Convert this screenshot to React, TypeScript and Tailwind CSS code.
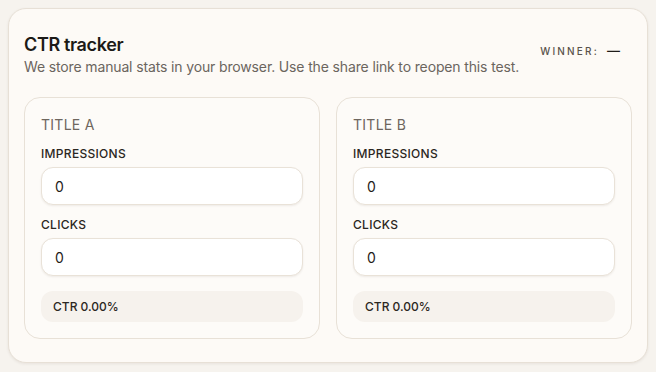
import React from "react";

function Field({ label, className }: { label: string; className?: string }) {
  return (
    <div className={"flex flex-col gap-[5px] " + (className ?? "")}>
      <label className="text-[12px] leading-4 font-medium uppercase tracking-[0.025em] text-[#2b2722]">{label}</label>
      <div className="flex h-[38px] items-center rounded-xl border border-[#e9e2d8] bg-white px-[13px] text-[14px] text-[#1f1c18] shadow-[0_1px_2px_rgba(60,40,20,0.08)]">0</div>
    </div>
  );
}

function Variant({ title }: { title: string }) {
  return (
    <div className="flex flex-col rounded-2xl border border-[#e8e1d7] bg-[#fdfbf8] p-4 pt-[17px]">
      <div className="text-[14px] leading-5 uppercase tracking-[0.02em] text-[#6e665e]">{title}</div>
      <Field label="Impressions" className="mt-[11px]" />
      <Field label="Clicks" className="mt-3" />
      <div className="mt-[15px] flex h-[31px] items-center rounded-xl bg-[#f6f2ed] px-3 text-[12px] font-medium text-[#2b2722]">CTR 0.00%</div>
    </div>
  );
}

export default function App() {
  return (
    <div className="min-h-[372px] w-[656px] bg-[#f6f3ee] p-2" style={{ fontFamily: "Inter, 'Noto Sans', sans-serif" }}>
      <div className="rounded-[18px] border border-[#e7e0d6] bg-[#fdfaf6] px-[15px] pt-6 pb-[23px] shadow-[0_1px_3px_rgba(60,40,20,0.08)]">
        <div className="flex items-center justify-between">
          <div>
            <h1 className="text-[18px] leading-6 font-semibold tracking-[-0.02em] text-[#1c1a17]">CTR tracker</h1>
            <p className="text-[14px] leading-5 tracking-[-0.01em] text-[#6b655e]">We store manual stats in your browser. Use the share link to reopen this test.</p>
          </div>
          <div className="mb-2 flex items-center gap-2 pr-[12px]">
            <span className="text-[10px] font-medium uppercase tracking-[0.22em] text-[#5a534b]">Winner:</span>
            <span className="text-[13px] font-semibold text-[#1f1c18]">—</span>
          </div>
        </div>
        <div className="mt-5 grid grid-cols-2 gap-4">
          <Variant title="Title A" />
          <Variant title="Title B" />
        </div>
      </div>
    </div>
  );
}
